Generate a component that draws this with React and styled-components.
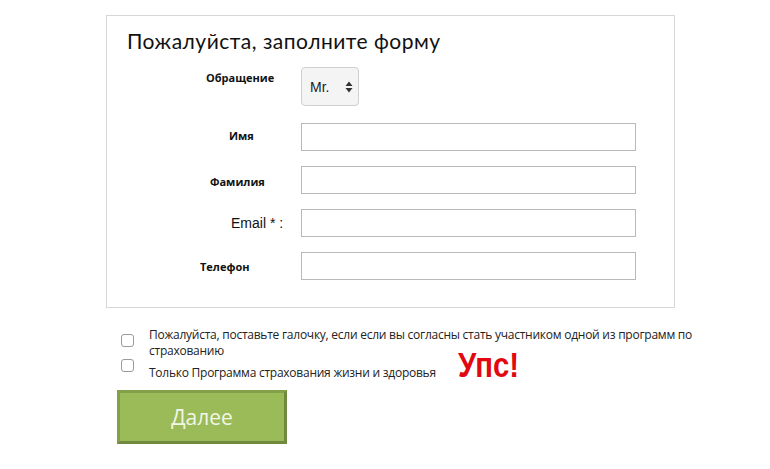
import React from "react";
import styled, { createGlobalStyle } from "styled-components";

const Global = createGlobalStyle`
  html, body { margin: 0; padding: 0; background: #fff; }
  body { font-family: "Open Sans", "Liberation Sans", sans-serif; color: #111; }
`;

const Page = styled.div`
  width: 770px;
  height: 469px;
  padding: 15px 0 0 106px;
  box-sizing: border-box;
  overflow: hidden;
`;

const Panel = styled.div`
  width: 569px;
  height: 293px;
  box-sizing: border-box;
  border: 1px solid #d6d6d6;
  padding: 13px 0 0 20px;
`;

const Title = styled.h1`
  margin: 0;
  font-family: "Lato", sans-serif;
  font-weight: 400;
  font-size: 21px;
  letter-spacing: 0.5px;
  line-height: 24px;
  color: #111;
`;

const Row = styled.div`
  display: flex;
  align-items: center;
  margin-top: ${(p) => p.$mt}px;
`;

const Label = styled.div`
  width: 174px;
  box-sizing: border-box;
  padding-left: ${(p) => p.$pl}px;
  font-family: ${(p) => (p.$plain ? '"Liberation Sans", Arial, sans-serif' : '"Open Sans", sans-serif')};
  font-size: ${(p) => (p.$plain ? 14 : 11)}px;
  font-weight: ${(p) => (p.$plain ? 400 : 700)};
  color: #111;
  transform: translateY(${(p) => p.$dy || 0}px);
`;

const Select = styled.div`
  width: 58px;
  height: 39px;
  box-sizing: border-box;
  border: 1px solid #d0d0d0;
  border-radius: 4px;
  background: #f4f4f4;
  display: flex;
  align-items: center;
  justify-content: space-between;
  padding: 0 5px 0 8px;
  font-family: "Liberation Sans", Arial, sans-serif;
  font-size: 14px;
  color: #222;
`;

const Input = styled.div`
  width: 335px;
  height: 28px;
  box-sizing: border-box;
  border: 1px solid #b9b9b9;
  background: #fff;
`;

const Consent = styled.div`
  display: grid;
  grid-template-columns: 28px auto;
  padding: 0 0 0 15px;
  margin-top: 19px;
  font-family: "Open Sans", sans-serif;
  font-size: 12px;
  color: #222;
`;

const Box = styled.span`
  width: 11px;
  height: 11px;
  border: 1px solid #9a9a9a;
  border-radius: 3px;
  display: block;
  margin-top: ${(p) => p.$mt}px;
`;

const Text = styled.div`
  line-height: 16px;
  letter-spacing: -0.25px;
`;

const LastLine = styled.div`
  display: flex;
  align-items: baseline;
  margin-top: -9px;
  line-height: 16px;
  letter-spacing: -0.25px;
`;

const Oops = styled.span`
  color: #e1080f;
  font-family: "Liberation Sans", Arial, sans-serif;
  font-weight: 700;
  font-size: 35px;
  line-height: 30px;
  letter-spacing: 0;
  margin-left: 22px;
  transform: scaleX(0.84);
  transform-origin: left bottom;
`;

const Button = styled.button`
  margin: 9px 0 0 11px;
  width: 170px;
  height: 54px;
  display: block;
  background: #9bbb59;
  border: 3px solid #71893f;
  border-top-color: #82a04a;
  border-left-color: #82a04a;
  color: #f2f6e6;
  font-family: "Open Sans", sans-serif;
  font-size: 21px;
  padding: 0;
  cursor: pointer;
`;

const Arrows = () => (
  <svg width="8" height="12" viewBox="0 0 8 12">
    <path d="M4 0.5 L7.5 5 L0.5 5 Z M4 11.5 L7.5 7 L0.5 7 Z" fill="#333" />
  </svg>
);

export default function App() {
  return (
    <Page>
      <Global />
      <Panel>
        <Title>Пожалуйста, заполните форму</Title>
        <Row $mt={14}>
          <Label $pl={79} $dy={-9}>Обращение</Label>
          <Select>
            <span>Mr.</span>
            <Arrows />
          </Select>
        </Row>
        <Row $mt={17}>
          <Label $pl={102} $dy={-2}>Имя</Label>
          <Input />
        </Row>
        <Row $mt={15}>
          <Label $pl={83} $dy={1}>Фамилия</Label>
          <Input />
        </Row>
        <Row $mt={15}>
          <Label $pl={104} $plain>Email * :</Label>
          <Input />
        </Row>
        <Row $mt={15}>
          <Label $pl={73}>Телефон</Label>
          <Input />
        </Row>
      </Panel>
      <Consent>
        <Box $mt={7} />
        <Text>
          Пожалуйста, поставьте галочку, если если вы согласны стать участником одной из программ по
          <br />
          страхованию
        </Text>
        <Box $mt={0} />
        <LastLine>
          <span>Только Программа страхования жизни и здоровья</span>
          <Oops>Упс!</Oops>
        </LastLine>
      </Consent>
      <Button>Далее</Button>
    </Page>
  );
}
